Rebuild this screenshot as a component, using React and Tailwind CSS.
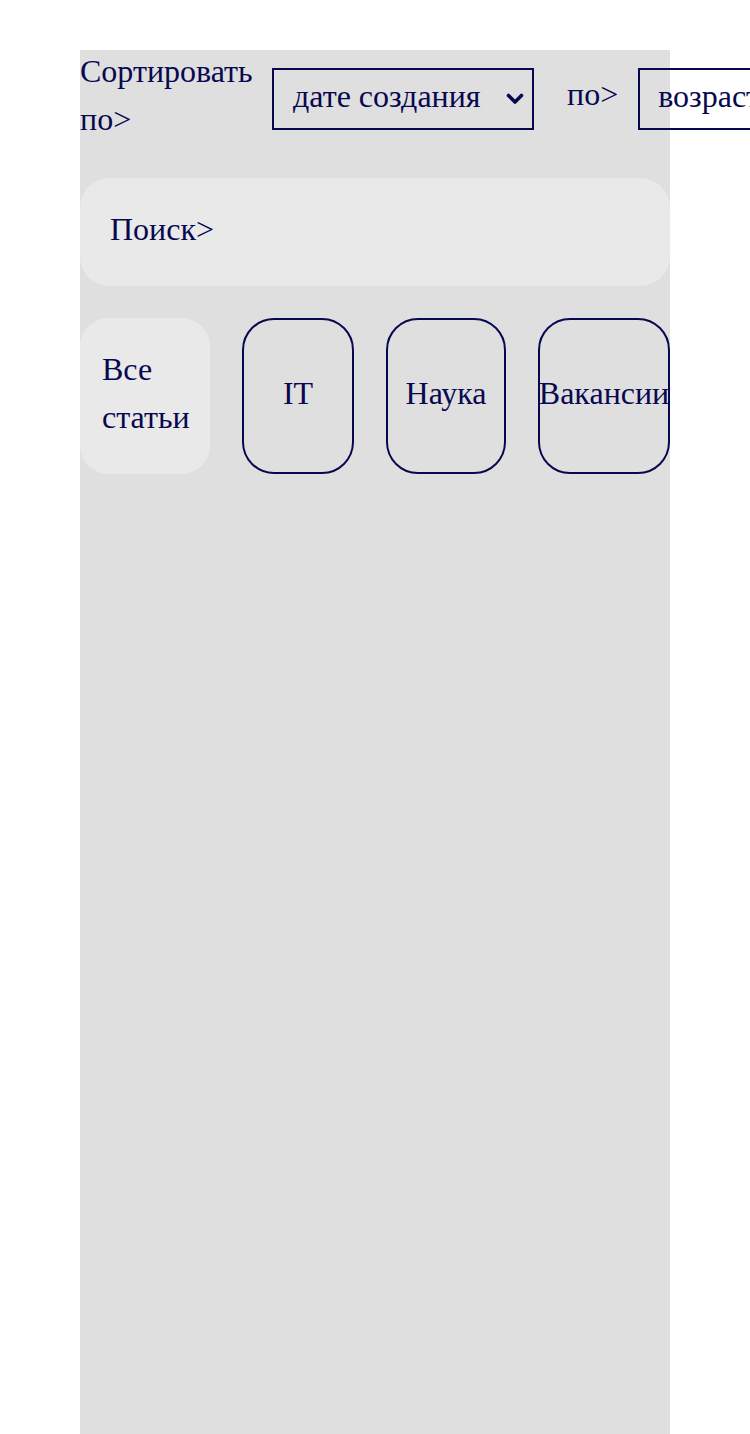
import React, { useState } from "react";

const font = "font-['Liberation_Serif',_'Times_New_Roman',_serif]";

const Chevron = () => (
  <svg className="shrink-0" width="18" height="12" viewBox="0 0 18 12" fill="none">
    <path d="M2.5 2.5 L9 9 L15.5 2.5" stroke="#080850" strokeWidth="3.6" strokeLinecap="round" strokeLinejoin="round" />
  </svg>
);

const SortSelect = ({ value, options, onChange, className }) => {
  const next = () => onChange(options[(options.indexOf(value) + 1) % options.length]);
  return (
    <button
      onClick={next}
      className={`${font} flex h-[62px] shrink-0 items-start justify-between overflow-hidden border-2 border-[#080850] bg-transparent pr-[8px] pt-[2px] text-left text-[32px] leading-[48px] text-[#080850] ${className}`}
    >
      <span className="whitespace-nowrap">{value}</span>
      <span className="mt-[21px] ml-[20px]">
        <Chevron />
      </span>
    </button>
  );
};

const categories = [
  { name: "IT", w: "w-[112px]" },
  { name: "Наука", w: "w-[120px]" },
  { name: "Вакансии", w: "w-[132px]" },
];

export default function App() {
  const [field, setField] = useState("дате создания");
  const [order, setOrder] = useState("возрастанию");
  const [active, setActive] = useState("all");

  return (
    <div className={`min-h-screen w-full overflow-x-hidden bg-white pt-[50px] ${font} text-[#080850]`}>
      <div className="ml-[80px] min-h-[1384px] w-[590px] bg-[#dfdfdf]">
        <div className="flex items-start pb-[3px]">
          <p className="-mt-[3px] w-[192px] shrink-0 text-[32px] leading-[48px]">Сортировать по&gt;</p>
          <SortSelect
            value={field}
            onChange={setField}
            options={["дате создания", "названию", "автору"]}
            className="mt-[18px] w-[262px] pl-[19px]"
          />
          <p className="ml-[33px] mt-[20px] shrink-0 text-[32px] leading-[48px]">по&gt;</p>
          <SortSelect
            value={order}
            onChange={setOrder}
            options={["возрастанию", "убыванию"]}
            className="ml-[20px] mt-[18px] w-[262px] pl-[18px]"
          />
        </div>

        <div className="mt-[32px] flex h-[108px] items-start rounded-[30px] bg-[#e9e9e9] px-[30px] pt-[27px]">
          <input
            type="text"
            placeholder="Поиск>"
            className={`${font} w-full bg-transparent text-[32px] leading-[48px] text-[#080850] outline-none placeholder:text-[#080850]`}
          />
        </div>

        <div className="mt-[32px] flex gap-[32px]">
          <button
            onClick={() => setActive("all")}
            className={`${font} w-[130px] shrink-0 rounded-[28px] bg-[#e9e9e9] px-[22px] pt-[27px] pb-[33px] text-left text-[32px] leading-[48px]`}
          >
            Все статьи
          </button>
          {categories.map((c) => (
            <button
              key={c.name}
              onClick={() => setActive(c.name)}
              className={`${font} ${c.w} flex h-[156px] shrink-0 items-center justify-center whitespace-nowrap rounded-[32px] border-2 border-[#080850] pb-[6px] text-[32px] leading-[48px]`}
            >
              {c.name}
            </button>
          ))}
        </div>
      </div>
    </div>
  );
}
